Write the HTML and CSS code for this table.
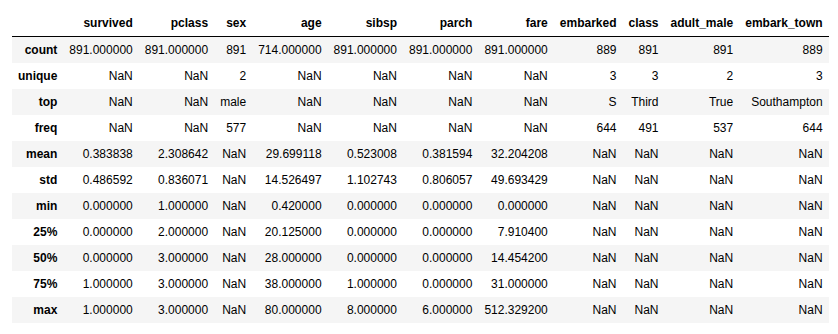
FILE: index.html
```html
<!DOCTYPE html>
<html lang="en">

<head>
    <meta charset="UTF-8" />
    <title>describe()</title>
    <link rel="stylesheet" href="styles.css">
</head>

<body>

    <div class="output-area">
        <table class="dataframe">
            <thead>
                <tr>
                    <th></th>
                    <th>survived</th>
                    <th>pclass</th>
                    <th>sex</th>
                    <th>age</th>
                    <th>sibsp</th>
                    <th>parch</th>
                    <th>fare</th>
                    <th>embarked</th>
                    <th>class</th>
                    <th>adult_male</th>
                    <th>embark_town</th>
                </tr>
            </thead>
            <tbody>
                <tr>
                    <th>count</th>
                    <td>891.000000</td><td>891.000000</td><td>891</td><td>714.000000</td><td>891.000000</td>
                    <td>891.000000</td><td>891.000000</td><td>889</td><td>891</td><td>891</td><td>889</td>
                </tr>
                <tr>
                    <th>unique</th>
                    <td>NaN</td><td>NaN</td><td>2</td><td>NaN</td><td>NaN</td>
                    <td>NaN</td><td>NaN</td><td>3</td><td>3</td><td>2</td><td>3</td>
                </tr>
                <tr>
                    <th>top</th>
                    <td>NaN</td><td>NaN</td><td>male</td><td>NaN</td><td>NaN</td>
                    <td>NaN</td><td>NaN</td><td>S</td><td>Third</td><td>True</td><td>Southampton</td>
                </tr>
                <tr>
                    <th>freq</th>
                    <td>NaN</td><td>NaN</td><td>577</td><td>NaN</td><td>NaN</td>
                    <td>NaN</td><td>NaN</td><td>644</td><td>491</td><td>537</td><td>644</td>
                </tr>
                <tr>
                    <th>mean</th>
                    <td>0.383838</td><td>2.308642</td><td>NaN</td><td>29.699118</td><td>0.523008</td>
                    <td>0.381594</td><td>32.204208</td><td>NaN</td><td>NaN</td><td>NaN</td><td>NaN</td>
                </tr>
                <tr>
                    <th>std</th>
                    <td>0.486592</td><td>0.836071</td><td>NaN</td><td>14.526497</td><td>1.102743</td>
                    <td>0.806057</td><td>49.693429</td><td>NaN</td><td>NaN</td><td>NaN</td><td>NaN</td>
                </tr>
                <tr>
                    <th>min</th>
                    <td>0.000000</td><td>1.000000</td><td>NaN</td><td>0.420000</td><td>0.000000</td>
                    <td>0.000000</td><td>0.000000</td><td>NaN</td><td>NaN</td><td>NaN</td><td>NaN</td>
                </tr>
                <tr>
                    <th>25%</th>
                    <td>0.000000</td><td>2.000000</td><td>NaN</td><td>20.125000</td><td>0.000000</td>
                    <td>0.000000</td><td>7.910400</td><td>NaN</td><td>NaN</td><td>NaN</td><td>NaN</td>
                </tr>
                <tr>
                    <th>50%</th>
                    <td>0.000000</td><td>3.000000</td><td>NaN</td><td>28.000000</td><td>0.000000</td>
                    <td>0.000000</td><td>14.454200</td><td>NaN</td><td>NaN</td><td>NaN</td><td>NaN</td>
                </tr>
                <tr>
                    <th>75%</th>
                    <td>1.000000</td><td>3.000000</td><td>NaN</td><td>38.000000</td><td>1.000000</td>
                    <td>0.000000</td><td>31.000000</td><td>NaN</td><td>NaN</td><td>NaN</td><td>NaN</td>
                </tr>
                <tr>
                    <th>max</th>
                    <td>1.000000</td><td>3.000000</td><td>NaN</td><td>80.000000</td><td>8.000000</td>
                    <td>6.000000</td><td>512.329200</td><td>NaN</td><td>NaN</td><td>NaN</td><td>NaN</td>
                </tr>
            </tbody>
        </table>
    </div>

</body>

</html>
```

FILE: styles.css
```css
body {
    background: #ffffff;
    font-family: "Liberation Sans", Arial, sans-serif;
    margin: 0;
    padding: 0;
}

.output-area {
    padding: 10px 0 0 12px;
}

.dataframe {
    border: none;
    border-collapse: collapse;
    border-spacing: 0;
    color: #000;
    font-size: 12px;
}

.dataframe th,
.dataframe td {
    text-align: right;
    vertical-align: middle;
    padding: 0.5em 0.5em;
    line-height: normal;
    white-space: nowrap;
    border: none;
}

.dataframe th {
    font-weight: bold;
}

.dataframe thead {
    border-bottom: 1px solid #000;
}

.dataframe tbody tr:nth-child(odd) {
    background: #f5f5f5;
}
```
